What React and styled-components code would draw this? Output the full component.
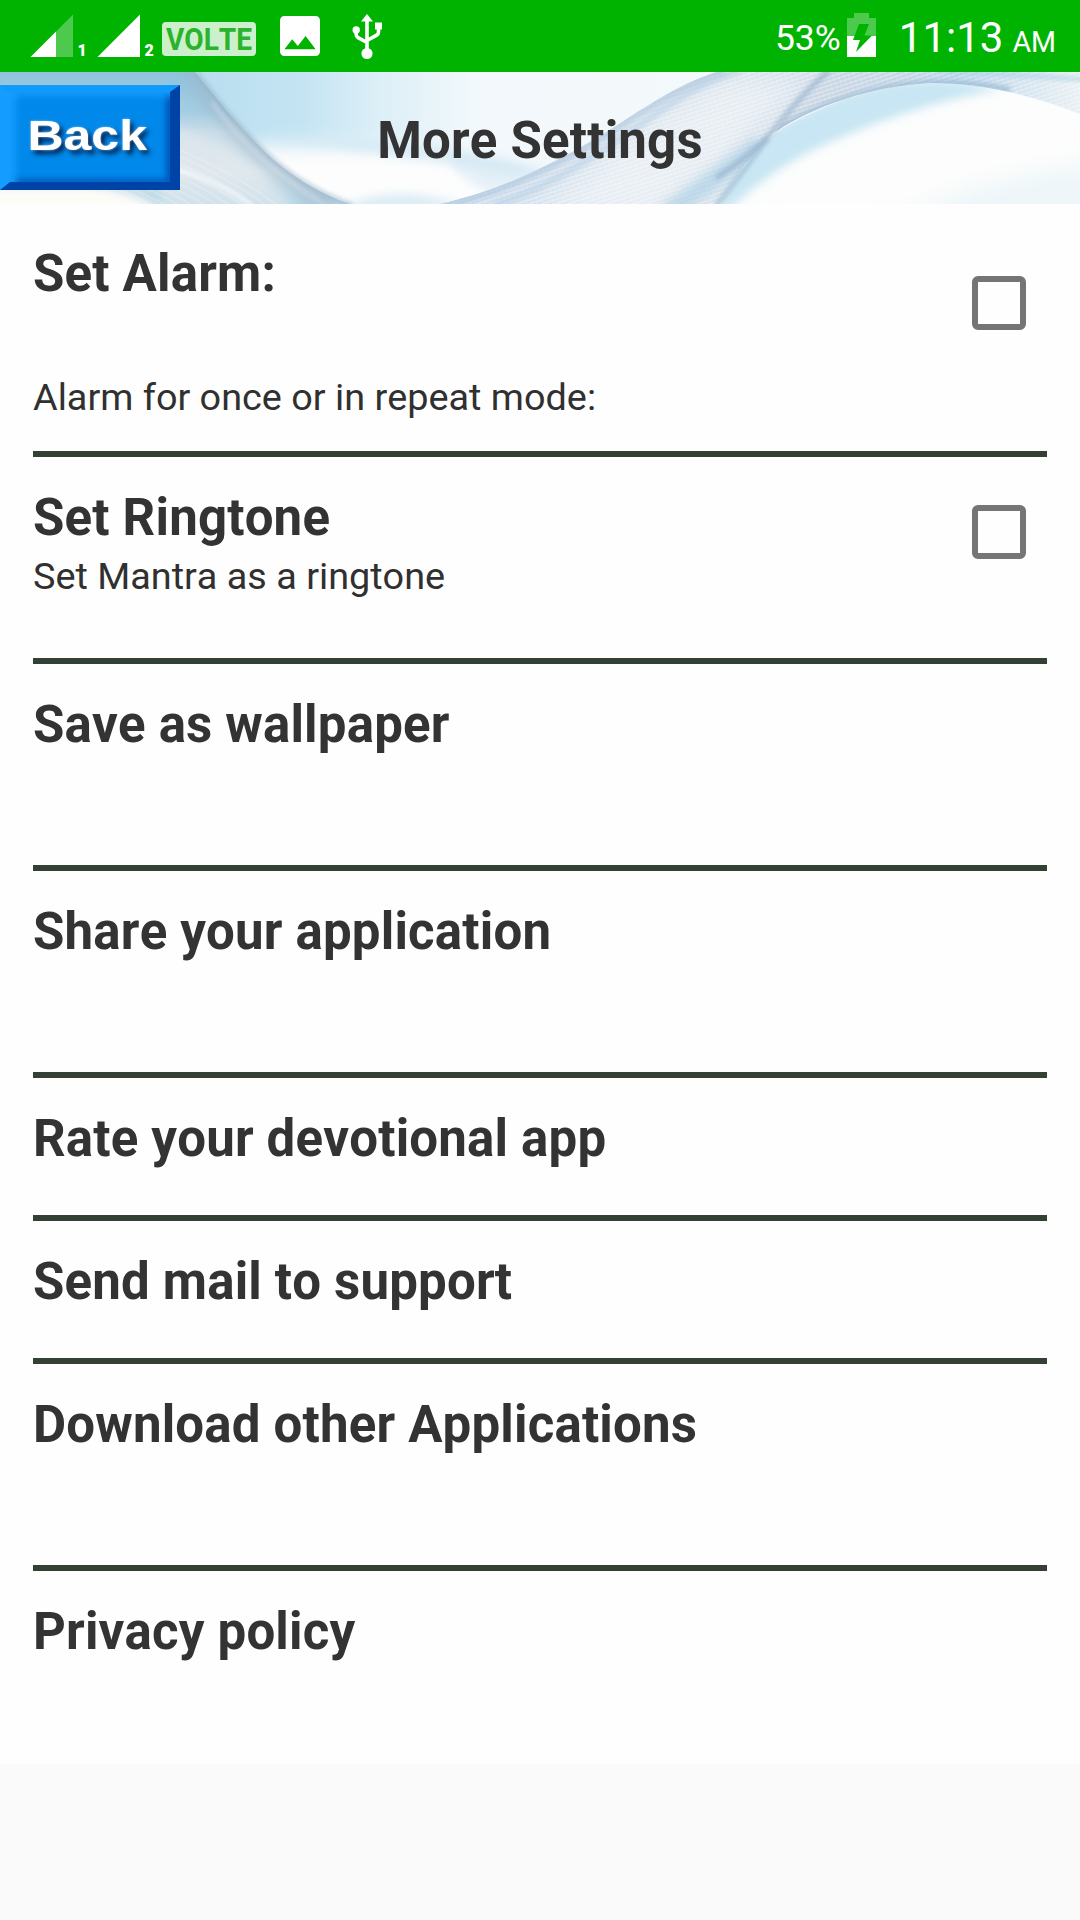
import React from 'react';
import styled, { createGlobalStyle } from 'styled-components';

const GlobalStyle = createGlobalStyle`
  * {
    box-sizing: border-box;
  }

  body {
    margin: 0;
    background-color: #fafafa;
    font-family: Roboto, "Liberation Sans", sans-serif;
    font-kerning: none;
  }
`;

const Screen = styled.div`
  width: 1080px;
  height: 1920px;
  overflow: hidden;
  background-color: #fafafa;
`;

const StatusBar = styled.div`
  height: 72px;
  display: flex;
  justify-content: space-between;
  background-color: #00b300;
  color: #fff;
`;

const StatusIcons = styled.svg`
  display: block;
  width: 400px;
  height: 72px;
`;

const StatusRight = styled.div`
  display: flex;
  align-items: flex-start;
  padding: 0 24px 0 0;
  white-space: nowrap;
`;

const Percent = styled.span`
  margin-top: 16px;
  font-size: 35.5px;
  line-height: 44px;
`;

const BatteryIcon = styled.svg`
  width: 29px;
  height: 44px;
  margin: 13px 23px 0 6px;
`;

const Clock = styled.span`
  margin-top: 12px;
  font-size: 42px;
  line-height: 52px;
`;

const Meridiem = styled.span`
  margin: 22px 0 0 9px;
  font-size: 28.6px;
  line-height: 40px;
`;

const Header = styled.header`
  position: relative;
  height: 132px;
  display: grid;
  grid-template-columns: 180px 1fr 180px;
  overflow: hidden;
  background-color: #f4f9fb;
`;

const HeaderArt = styled.svg`
  position: absolute;
  inset: 0;
  width: 1080px;
  height: 132px;
`;

const BackButton = styled.button`
  position: relative;
  height: 105px;
  margin: 13px 0 0;
  padding: 0 6px 3px 0;
  border-style: solid;
  border-width: 7px 10px 8px 10px;
  border-color: #109afd #0043a6 #0043a6 #149cff;
  background-color: #0089ea;
  box-shadow: inset 6px 4px 7px #149cfd, inset -4px -3px 6px #0055ba;
  cursor: pointer;
`;

const BackLabel = styled.span`
  display: inline-block;
  color: #fff;
  font-family: "Liberation Sans", Arial, sans-serif;
  font-size: 42px;
  font-weight: bold;
  line-height: 48px;
  transform: scaleX(1.19);
  text-shadow: 0 0 2px rgba(255, 255, 255, 0.6), 3px 4px 5px rgba(0, 20, 60, 0.9);
`;

const Title = styled.h1`
  position: relative;
  margin: 39px 0 0;
  color: #333;
  font-size: 51px;
  font-weight: bold;
  line-height: 60px;
  letter-spacing: 0.18px;
  text-align: center;
`;

const Settings = styled.main`
  background-color: #fefefe;
`;

const Row = styled.section`
  height: ${({ $height }) => $height}px;
  margin: 0 33px;
  padding-top: ${({ $top }) => $top || 31}px;
  display: flex;
  justify-content: space-between;
  border-bottom: ${({ $last }) => ($last ? 'none' : '6px solid #334033')};
`;

const RowTitle = styled.h2`
  margin: 0;
  color: #333;
  font-size: 51px;
  font-weight: bold;
  line-height: 60px;
  letter-spacing: 0.18px;
`;

const RowNote = styled.p`
  margin: ${({ $gap }) => $gap || 0}px 0 0;
  color: #303030;
  font-size: 37.8px;
  line-height: 46px;
`;

const Checkbox = styled.input`
  appearance: none;
  width: 54px;
  height: 54px;
  margin: ${({ $offset }) => $offset}px 21px 0 0;
  border-radius: 6px;
  border: 6px solid #757575;
`;

const rows = [
  { title: 'Set Alarm:', note: 'Alarm for once or in repeat mode:', noteGap: 70, height: 253, top: 40, check: 32 },
  { title: 'Set Ringtone', note: 'Set Mantra as a ringtone', noteGap: 5, height: 207, check: 17 },
  { title: 'Save as wallpaper', height: 207 },
  { title: 'Share your application', height: 207 },
  { title: 'Rate your devotional app', height: 143 },
  { title: 'Send mail to support', height: 143 },
  { title: 'Download other Applications', height: 207 },
  { title: 'Privacy policy', height: 193 },
];

// fine threads that follow a curve, each one shifted by a step
const Threads = ({ d, count, dx, dy, color }) => (
  <g fill="none" stroke={color} strokeWidth="1.2">
    {Array.from({ length: count }, (_, i) => (
      <path key={i} d={d} transform={`translate(${i * dx} ${i * dy})`} />
    ))}
  </g>
);

const Waves = () => (
  <HeaderArt viewBox="0 0 1080 132" preserveAspectRatio="none">
    <defs>
      <linearGradient id="sky" x1="0" x2="1" y1="0" y2="0">
        <stop offset="0.18" stopColor="#b9deef" />
        <stop offset="0.28" stopColor="#c4e4f3" />
        <stop offset="0.35" stopColor="#dceff7" />
        <stop offset="0.44" stopColor="#f2f8fb" />
        <stop offset="1" stopColor="#f7fbfc" />
      </linearGradient>
      <linearGradient id="fold" x1="0" x2="0" y1="0" y2="1">
        <stop offset="0" stopColor="#8fc3de" />
        <stop offset="0.3" stopColor="#a4cde2" />
        <stop offset="0.45" stopColor="#c8dce8" />
        <stop offset="0.75" stopColor="#dae6ed" />
        <stop offset="1" stopColor="#b5d6e7" />
      </linearGradient>
      <linearGradient id="band" x1="0" x2="1" y1="0" y2="0">
        <stop offset="0" stopColor="#cbdcec" />
        <stop offset="0.5" stopColor="#dfe8f0" />
        <stop offset="1" stopColor="#d0dde9" />
      </linearGradient>
      <linearGradient id="crest" x1="0" x2="1" y1="0" y2="0">
        <stop offset="0" stopColor="#cbd6e3" />
        <stop offset="0.4" stopColor="#c3d5e5" />
        <stop offset="0.6" stopColor="#b9d6ea" />
        <stop offset="1" stopColor="#e9eff3" />
      </linearGradient>
      <pattern id="mesh" width="5" height="4" patternUnits="userSpaceOnUse" patternTransform="rotate(-18)">
        <path d="M0 1H5" stroke="#fff" strokeWidth="1.3" opacity="0.45" />
        <path d="M1 0V4" stroke="#fff" strokeWidth="1" opacity="0.2" />
      </pattern>
      <clipPath id="bandClip">
        <path d="M440 132C510 117 580 78 625 48C665 22 690 8 722 -2H840C800 30 780 55 745 92L718 134Z" />
      </clipPath>
      <clipPath id="crestClip">
        <path d="M775 60C815 34 870 14 930 11C980 11 1030 22 1080 42V0H826C806 20 790 40 775 60Z" />
      </clipPath>
      <clipPath id="foldClip">
        <path d="M0 0H195C215 25 235 50 265 80C290 104 320 122 350 132H0Z" />
      </clipPath>
      <clipPath id="hillClip">
        <path d="M716 134C745 96 755 72 790 52C830 30 880 12 930 11C985 11 1035 22 1082 42V134Z" />
      </clipPath>
      <filter id="soft2" x="-10%" y="-30%" width="120%" height="160%">
        <feGaussianBlur stdDeviation="2" />
      </filter>
      <filter id="soft5" x="-20%" y="-60%" width="140%" height="220%">
        <feGaussianBlur stdDeviation="5" />
      </filter>
      <filter id="soft10" x="-20%" y="-60%" width="140%" height="220%">
        <feGaussianBlur stdDeviation="10" />
      </filter>
    </defs>

    <rect width="1080" height="132" fill="url(#sky)" />
    <path d="M240 74C300 70 350 74 470 80L540 150H350C290 130 260 100 240 74Z" fill="#fdfdfd" filter="url(#soft10)" />

    {/* faint swell under the title */}
    <path d="M270 70C380 60 480 76 550 102C480 100 380 78 270 70Z" fill="#cfe6f3" opacity="0.7" filter="url(#soft5)" />
    <path d="M450 84C490 86 525 96 545 101L490 120C470 112 450 100 450 84Z" fill="#cde4f2" opacity="0.5" filter="url(#soft5)" />
    <path d="M330 142C370 116 420 116 470 136Z" fill="#c6e2f0" opacity="0.6" filter="url(#soft5)" />

    {/* left fold */}
    <path d="M0 0H195C215 25 235 50 265 80C290 104 320 122 350 132H0Z" fill="url(#fold)" />
    <g clipPath="url(#foldClip)">
      <path d="M-20 114H90C120 118 150 125 180 150H-20Z" fill="#fdfdf8" filter="url(#soft5)" />
      <path d="M160 54C220 60 250 90 300 140H160Z" fill="#e4eaee" opacity="0.6" filter="url(#soft5)" />
      <Threads d="M150 66C200 84 250 110 300 150" count={12} dx={-6} dy={4} color="rgba(255,255,255,0.28)" />
      <path d="M170 96C210 106 236 120 256 138" fill="none" stroke="#f9fbfb" strokeWidth="4" opacity="0.8" filter="url(#soft2)" />
      <path d="M190 -4C215 35 255 84 330 134" fill="none" stroke="#9fb7ca" strokeWidth="22" opacity="0.5" filter="url(#soft5)" />
      <path d="M212 30C236 64 270 100 326 134" fill="none" stroke="#d3e0ea" strokeWidth="3" opacity="0.7" filter="url(#soft2)" />
    </g>
    <path d="M196 0C216 26 236 52 265 80C290 104 320 122 352 133" fill="none" stroke="#93adc3" strokeWidth="4" opacity="0.6" filter="url(#soft2)" />

    {/* broad ribbon */}
    <path d="M440 132C510 117 580 78 625 48C665 22 690 8 722 -2H840C800 30 780 55 745 92L718 134Z" fill="url(#band)" />
    <g clipPath="url(#bandClip)">
      <path d="M540 140L640 70L730 10H800L730 80L650 140Z" fill="#ebf0f4" opacity="0.7" filter="url(#soft10)" />
      <rect x="430" width="420" height="134" fill="url(#mesh)" />
      <path d="M440 134C515 117 580 80 625 50C665 24 690 10 724 -2" fill="none" stroke="#a9c3dd" strokeWidth="9" opacity="0.6" filter="url(#soft2)" />
      <path d="M492 134C560 112 620 66 662 38S710 10 740 -2" fill="none" stroke="#b0cae3" strokeWidth="7" opacity="0.5" filter="url(#soft2)" />
      <path d="M660 146C690 124 725 100 760 72" fill="none" stroke="#a5cde4" strokeWidth="18" opacity="0.6" filter="url(#soft5)" />
    </g>

    {/* white hill on the right */}
    <path d="M716 134C745 96 755 72 790 52C830 30 880 12 930 11C985 11 1035 22 1082 42V134Z" fill="#fcfdfd" />
    <g clipPath="url(#hillClip)">
      <path d="M716 134C745 90 755 66 790 48C830 26 880 8 930 8C955 8 980 12 1000 18C930 30 860 56 810 80C775 98 750 118 728 140Z" fill="#c8e6f3" filter="url(#soft5)" />
      <path d="M730 150C810 92 880 52 1010 30L1100 50V150Z" fill="#fcfdfc" filter="url(#soft10)" />
      <path d="M880 160C940 120 1020 100 1100 92V160Z" fill="#eef6f9" filter="url(#soft10)" />
    </g>

    <path d="M775 60C815 34 870 14 930 11C980 11 1030 22 1080 42V0H826C806 20 790 40 775 60Z" fill="url(#crest)" />
    <g clipPath="url(#crestClip)">
      <rect x="770" width="310" height="60" fill="url(#mesh)" />
      <path d="M940 -2C990 2 1040 4 1090 8" fill="none" stroke="#9ccbe6" strokeWidth="5" opacity="0.5" filter="url(#soft2)" />
      <path d="M775 60C815 34 870 14 930 11C960 10 990 14 1010 18" fill="none" stroke="#94b6d2" strokeWidth="6" opacity="0.7" filter="url(#soft2)" />
    </g>
    <path d="M716 106C750 84 768 66 780 50C796 30 810 14 830 -2" fill="none" stroke="#8eabc8" strokeWidth="5" opacity="0.65" filter="url(#soft2)" />
    <path d="M716 134C740 104 752 86 768 66" fill="none" stroke="#90b0cc" strokeWidth="5" opacity="0.65" filter="url(#soft2)" />
  </HeaderArt>
);

const NotificationIcons = () => (
  <StatusIcons viewBox="0 0 400 72" fill="#fff">
    <path d="M56 57V31.500L73 14.500V57Z" opacity="0.3" />
    <path d="M30.500 57L56 31.500V57Z" />
    <text x="77.500" y="56" fontSize="16" fontWeight="900">1</text>
    <path d="M97.500 57L140 14.500V57Z" />
    <text x="144.500" y="56" fontSize="16" fontWeight="900">2</text>
    <rect x="162" y="22" width="94" height="34" rx="4" opacity="0.8" />
    <text x="166" y="50" fontSize="31" fontWeight="bold" fill="#2bb32b" textLength="86" lengthAdjust="spacingAndGlyphs">VOLTE</text>
    <path fillRule="evenodd" d="M284.400 16H315.600A4.400 4.400 0 0 1 320 20.400V51.600A4.400 4.400 0 0 1 315.600 56H284.400A4.400 4.400 0 0 1 280 51.600V20.400A4.400 4.400 0 0 1 284.400 16ZM292.200 39.300L284.400 49.300H315.600L305.600 36L297.800 46Z" />
    <path d="M367 14L373 21.500H361Z" />
    <path d="M367 20V52M356.200 30V34.500Q356.200 36.500 358 37.600L367 42.500M378.500 27V32Q378.500 34 376.700 35.200L367 40.500" fill="none" stroke="#fff" strokeWidth="3.600" />
    <circle cx="367" cy="53.500" r="5.600" />
    <circle cx="356.200" cy="30" r="3.700" />
    <rect x="375" y="22.500" width="7" height="7" />
  </StatusIcons>
);

const Battery = () => (
  <BatteryIcon viewBox="0 0 29 44">
    <path d="M7 0H22V5H29V23H0V5H7Z" fill="#fff" opacity="0.3" />
    <rect y="23" width="29" height="21" fill="#fff" />
    <path d="M12 11H22L17.500 22.500H25L9 39L13 27H6Z" fill="#00b300" />
  </BatteryIcon>
);

const App = () => {
  return (
    <Screen>
      <GlobalStyle />
      <StatusBar>
        <NotificationIcons />
        <StatusRight>
          <Percent>53%</Percent>
          <Battery />
          <Clock>11:13</Clock>
          <Meridiem>AM</Meridiem>
        </StatusRight>
      </StatusBar>

      <Header>
        <Waves />
        <BackButton>
          <BackLabel>Back</BackLabel>
        </BackButton>
        <Title>More Settings</Title>
      </Header>

      <Settings>
        {rows.map((row, i) => (
          <Row key={row.title} $height={row.height} $top={row.top} $last={i === rows.length - 1}>
            <div>
              <RowTitle>{row.title}</RowTitle>
              {row.note && <RowNote $gap={row.noteGap}>{row.note}</RowNote>}
            </div>
            {row.check && <Checkbox type="checkbox" aria-label={row.title} $offset={row.check} />}
          </Row>
        ))}
      </Settings>
    </Screen>
  );
};

export default App;
